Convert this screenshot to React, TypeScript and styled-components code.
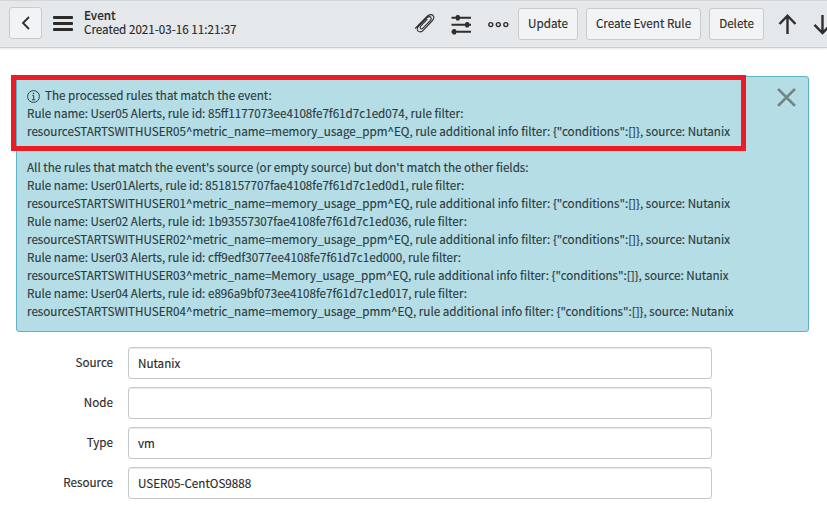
import React from "react";
import styled, { createGlobalStyle } from "styled-components";

const GlobalStyle = createGlobalStyle`
  * { box-sizing: border-box; }
  body {
    margin: 0;
    background: #fff;
    color: #2a2a2a;
    font-family: "Noto Sans CJK SC", "Noto Sans", sans-serif;
    font-size: 11.653px;
    line-height: 18px;
    -webkit-text-stroke: 0.15px currentColor;
    overflow: hidden;
  }
`;

const Page = styled.div`
  width: 827px;
  height: 505px;
  overflow: hidden;
`;

const Header = styled.header`
  display: flex;
  align-items: flex-start;
  height: 48px;
  padding: 6px 0 0 9px;
  background: #e4e8eb;
  border-top: 1px solid #d3d7da;
  border-bottom: 1px solid #c9cdd0;
  box-shadow: 0 1px 2px rgba(0, 0, 0, 0.1);
`;

const Button = styled.button<{ $width: number }>`
  display: flex;
  align-items: center;
  justify-content: center;
  flex: none;
  width: ${(p) => p.$width}px;
  height: 32px;
  padding: 0 0 2px;
  background: #f1f3f5;
  border: 1px solid #c9cacc;
  border-radius: 3px;
  color: #2a2a2a;
  font: inherit;
  white-space: nowrap;
`;

const BackIcon = styled.svg`
  margin-top: 2px;
`;

const MenuIcon = styled.svg`
  flex: none;
  margin: 9px 11px 0 11px;
`;

const Title = styled.div`
  flex: 1;
  padding-top: 1px;
  line-height: 14px;
  white-space: nowrap;
`;

const Name = styled.div`
  font-weight: 500;
`;

const Actions = styled.div`
  display: flex;
  flex: none;
  gap: 8px;
  padding-top: 1px;
`;

const Tools = styled.svg`
  flex: none;
`;

const Arrows = styled.svg`
  flex: none;
`;

const Alert = styled.section`
  position: relative;
  width: 793px;
  height: 256px;
  margin: 28px 0 0 16px;
  padding: 9px 10px;
  background: #b5dde5;
  border: 1px solid #5fb5c5;
  border-radius: 3px;
  color: #2b3b40;
`;

const Line = styled.div`
  display: flex;
  height: 18px;
  white-space: pre;
`;

const InfoIcon = styled.svg`
  flex: none;
  margin: 4px 5px 0 0;
`;

const Highlight = styled.div`
  position: absolute;
  left: -6px;
  top: -2px;
  width: 735px;
  height: 76px;
  border: 5px solid #ec1c24;
`;

const Close = styled.svg`
  position: absolute;
  left: 758px;
  top: 9px;
`;

const Form = styled.form`
  display: flex;
  flex-direction: column;
  gap: 8px;
  padding-top: 15px;
`;

const Field = styled.label`
  display: grid;
  grid-template-columns: 113px 584px;
  column-gap: 15px;
`;

const Label = styled.span`
  padding-top: 6px;
  text-align: right;
`;

const Input = styled.input`
  height: 32px;
  padding: 0 9px 2px;
  border: 1px solid #c6c7c8;
  border-radius: 3px;
  box-shadow: inset 0 1px 1px rgba(0, 0, 0, 0.08);
  color: #2a2a2a;
  font: inherit;
  outline: none;
`;

const otherRules = [
  "All the rules that match the event's source (or empty source) but don't match the other fields:",
  "Rule name: User01Alerts, rule id: 8518157707fae4108fe7f61d7c1ed0d1, rule filter:",
  'resourceSTARTSWITHUSER01^metric_name=memory_usage_ppm^EQ, rule additional info filter: {"conditions":[]}, source: Nutanix',
  "Rule name: User02 Alerts, rule id: 1b93557307fae4108fe7f61d7c1ed036, rule filter:",
  'resourceSTARTSWITHUSER02^metric_name=memory_usage_ppm^EQ, rule additional info filter: {"conditions":[]}, source: Nutanix',
  "Rule name: User03 Alerts, rule id: cff9edf3077ee4108fe7f61d7c1ed000, rule filter:",
  'resourceSTARTSWITHUSER03^metric_name=Memory_usage_ppm^EQ, rule additional info filter: {"conditions":[]}, source: Nutanix',
  "Rule name: User04 Alerts, rule id: e896a9bf073ee4108fe7f61d7c1ed017, rule filter:",
  'resourceSTARTSWITHUSER04^metric_name=memory_usage_pmm^EQ, rule additional info filter: {"conditions":[]}, source: Nutanix',
];

const fields = [
  ["Source", "Nutanix"],
  ["Node", ""],
  ["Type", "vm"],
  ["Resource", "USER05-CentOS9888"],
];

export default function App() {
  return (
    <Page>
      <GlobalStyle />
      <Header>
        <Button $width={33} aria-label="Back">
          <BackIcon width="10" height="14" viewBox="0 0 10 14" fill="none" stroke="#2e2e2e" strokeWidth="1.8">
            <path d="M8 1L2 7l6 6" />
          </BackIcon>
        </Button>
        <MenuIcon width="20" height="15" viewBox="0 0 20 15" fill="#2b2b2b">
          <rect width="20" height="3" rx="1" />
          <rect y="6" width="20" height="3" rx="1" />
          <rect y="12" width="20" height="3" rx="1" />
        </MenuIcon>
        <Title>
          <Name>Event</Name>
          <div>Created 2021-03-16 11:21:37</div>
        </Title>
        <Tools width="108" height="36" viewBox="410 7 108 36" fill="none" stroke="#2e2e2e">
          <path
            d="M415.2 28.5L426.5 16.9C429 14.2 432.1 14 433.2 15.6C434.5 17.3 433.7 19.2 432 21L423.2 30.4C421.5 32.3 419 32.2 418 31C416.7 29.7 417.2 27.7 418.7 26.2L426.8 17.9C428.4 16.2 430.3 16.3 430.9 17.3C431.7 18.4 431.3 19.6 430.2 20.7L423 28.2C422.1 29.1 421 29.2 420.4 28.4C419.8 27.7 420.1 26.7 420.9 25.9L427.4 19.1"
            strokeWidth="1.1"
          />
          <g strokeWidth="1.9">
            <path d="M451.5 17.8h19.5M451.5 24.8h19.5M451.5 31.8h19.5" />
          </g>
          <g fill="#2e2e2e" stroke="none">
            <rect x="455.8" y="15" width="4" height="5.6" rx="1.5" />
            <rect x="465.2" y="22" width="4" height="5.6" rx="1.5" />
            <rect x="452.2" y="29" width="4" height="5.6" rx="1.5" />
          </g>
          <g strokeWidth="1.4">
            <circle cx="490.8" cy="24.6" r="2" />
            <circle cx="498.3" cy="24.6" r="2" />
            <circle cx="505.8" cy="24.6" r="2" />
          </g>
        </Tools>
        <Actions>
          <Button $width={60}>Update</Button>
          <Button $width={115}>Create Event Rule</Button>
          <Button $width={55}>Delete</Button>
        </Actions>
        <Arrows width="63" height="36" viewBox="764 7 63 36" fill="none" stroke="#2e2e2e" strokeWidth="2.4">
          <path d="M787.5 34V16M779.5 24l8-8.3l8 8.3" />
          <path d="M822.5 15v18M814.5 24.8l8 8.3l8-8.3" />
        </Arrows>
      </Header>
      <Alert>
        <Line>
          <InfoIcon width="13" height="13" viewBox="0 0 13 13" fill="none" stroke="#2e3d41">
            <circle cx="6.5" cy="6.5" r="5.9" />
            <path d="M5.3 5.6h1.4v4.2M5 9.8h3.2" />
            <path d="M6.5 2.8v1.4" strokeWidth="1.3" />
          </InfoIcon>
          <span>The processed rules that match the event:</span>
        </Line>
        <Line>Rule name: User05 Alerts, rule id: 85ff1177073ee4108fe7f61d7c1ed074, rule filter:</Line>
        <Line>
          {'resourceSTARTSWITHUSER05^metric_name=memory_usage_ppm^EQ, rule additional info filter: {"conditions":[]}, source: Nutanix'}
        </Line>
        <Line />
        {otherRules.map((text) => (
          <Line key={text}>{text}</Line>
        ))}
        <Close width="22" height="22" viewBox="0 0 22 22" fill="none" strokeWidth="2.8">
          <path d="M3 4l17 17M20 4l-17 17" stroke="#d5e9ed" />
          <path d="M3 3l17 17M20 3l-17 17" stroke="#71868b" />
        </Close>
        <Highlight />
      </Alert>
      <Form>
        {fields.map(([label, value]) => (
          <Field key={label}>
            <Label>{label}</Label>
            <Input defaultValue={value} />
          </Field>
        ))}
      </Form>
    </Page>
  );
}
